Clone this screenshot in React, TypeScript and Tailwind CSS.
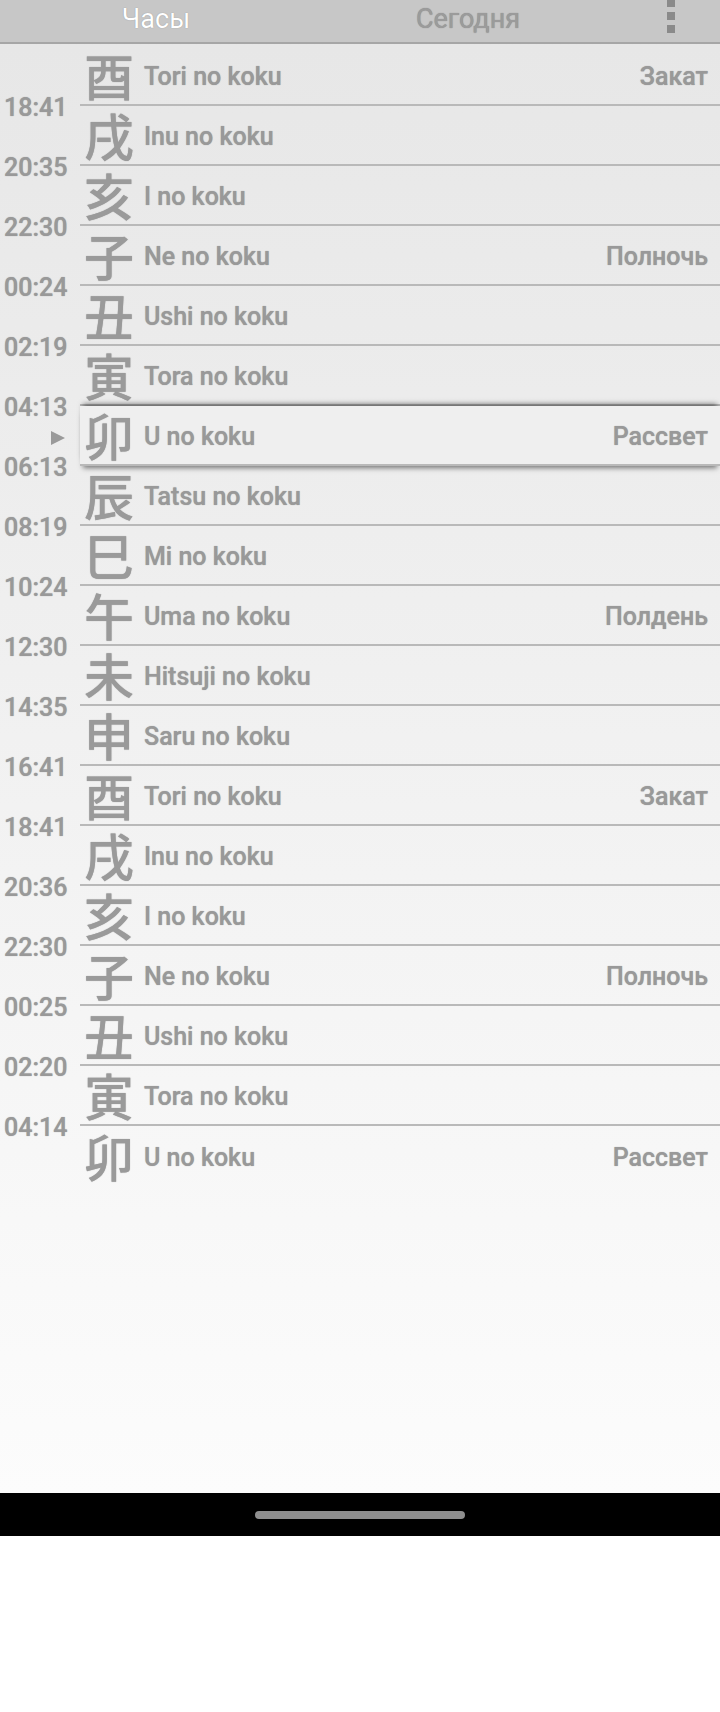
import React from "react";

type Koku = {
  kanji: string;
  name: string;
  label?: string;
  end?: string;
  current?: boolean;
};

const rows: Koku[] = [
  { kanji: "酉", name: "Tori no koku", label: "Закат", end: "18:41" },
  { kanji: "戌", name: "Inu no koku", end: "20:35" },
  { kanji: "亥", name: "I no koku", end: "22:30" },
  { kanji: "子", name: "Ne no koku", label: "Полночь", end: "00:24" },
  { kanji: "丑", name: "Ushi no koku", end: "02:19" },
  { kanji: "寅", name: "Tora no koku", end: "04:13" },
  { kanji: "卯", name: "U no koku", label: "Рассвет", end: "06:13", current: true },
  { kanji: "辰", name: "Tatsu no koku", end: "08:19" },
  { kanji: "巳", name: "Mi no koku", end: "10:24" },
  { kanji: "午", name: "Uma no koku", label: "Полдень", end: "12:30" },
  { kanji: "未", name: "Hitsuji no koku", end: "14:35" },
  { kanji: "申", name: "Saru no koku", end: "16:41" },
  { kanji: "酉", name: "Tori no koku", label: "Закат", end: "18:41" },
  { kanji: "戌", name: "Inu no koku", end: "20:36" },
  { kanji: "亥", name: "I no koku", end: "22:30" },
  { kanji: "子", name: "Ne no koku", label: "Полночь", end: "00:25" },
  { kanji: "丑", name: "Ushi no koku", end: "02:20" },
  { kanji: "寅", name: "Tora no koku", end: "04:14" },
  { kanji: "卯", name: "U no koku", label: "Рассвет" },
];

const rim = "[text-shadow:0_0_1px_rgba(0,0,0,0.35)]";

function Arrow() {
  return (
    <svg width="16" height="16" viewBox="0 0 16 16">
      <polygon points="1,1 15,8 1,15" fill="#9a9a9a" />
    </svg>
  );
}

export default function App() {
  return (
    <div className="w-[720px] h-[1712px] bg-white flex flex-col font-['Roboto','Liberation_Sans',sans-serif] overflow-hidden">
      {/* tabs */}
      <div className="h-[44px] shrink-0 flex bg-[#c7c7c7] border-b-2 border-[#a6a6a6]">
        <div className={`w-[312px] flex items-center justify-center pb-[4px] text-[27px] text-white ${rim}`}>Часы</div>
        <div className={`w-[312px] flex items-center justify-center pb-[4px] text-[27px] text-[#9b9b9b] ${rim}`}>Сегодня</div>
        <div className="flex-1 flex justify-end pr-[45px]">
          <div className="flex flex-col gap-[5px] -mt-[1px]">
            <div className="w-[8px] h-[8px] bg-[#8a8a8a]" />
            <div className="w-[8px] h-[8px] bg-[#8a8a8a]" />
            <div className="w-[8px] h-[8px] bg-[#8a8a8a]" />
          </div>
        </div>
      </div>

      {/* list */}
      <div className="flex-1 flex bg-gradient-to-b from-[#e7e7e7] to-[#fcfcfc]">
        <div className="w-[80px] shrink-0 flex flex-col pt-[49px]">
          {rows.map((r, i) => (
            <React.Fragment key={i}>
              {r.end && (
                <div className={`h-[30px] flex items-center pl-[4px] text-[25px] font-medium text-[#999999] ${rim}`}>{r.end}</div>
              )}
              {r.end && (
                <div className="h-[30px] flex items-center justify-end pr-[14px]">
                  {rows[i + 1]?.current && <Arrow />}
                </div>
              )}
            </React.Fragment>
          ))}
        </div>
        <div className="flex-1 flex flex-col pt-[2px]">
          {rows.map((r, i) => (
            <div
              key={i}
              className={`h-[60px] flex items-center ${i < rows.length - 1 ? "border-b-2 border-[#b9b9b9]" : ""} ${
                r.current
                  ? "relative bg-[#efefef] shadow-[0_-5px_5px_-3px_rgba(0,0,0,0.5),0_5px_5px_-3px_rgba(0,0,0,0.5)]"
                  : ""
              }`}
            >
              <div className={`w-[64px] pl-[4px] -mt-[2px] text-[50px] leading-none font-medium text-[#9a9a9a] font-['Noto_Sans_CJK_JP',sans-serif] ${rim}`}>
                {r.kanji}
              </div>
              <div className={`flex-1 mt-[4px] text-[25px] font-medium text-[#999999] ${rim}`}>{r.name}</div>
              {r.label && <div className={`pr-[12px] mt-[4px] text-[25px] font-medium text-[#999999] ${rim}`}>{r.label}</div>}
            </div>
          ))}
        </div>
      </div>

      {/* nav bar */}
      <div className="h-[43px] shrink-0 bg-black flex items-center justify-center">
        <div className="w-[210px] h-[8px] rounded-full bg-[#8e8e8e]" />
      </div>
      <div className="h-[176px] shrink-0 bg-white" />
    </div>
  );
}
